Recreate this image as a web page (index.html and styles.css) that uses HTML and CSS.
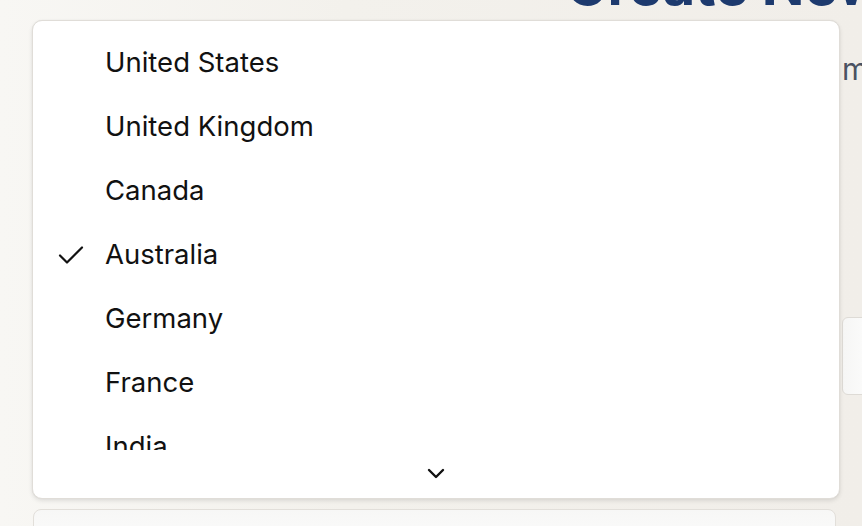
FILE: index.html
```html
<!DOCTYPE html>
<html>
<head>
<meta charset="utf-8">
<link rel="stylesheet" href="styles.css">
</head>
<body>
<div class="page">
  <h1 class="title">Create New</h1>
  <p class="subtitle">m</p>
  <div class="field"></div>
  <div class="card"></div>
</div>
<div class="menu">
  <div class="list">
    <div class="item">United States</div>
    <div class="item">United Kingdom</div>
    <div class="item">Canada</div>
    <div class="item selected">
      <svg class="check" width="26" height="20" viewBox="0 0 26 20"><path d="M2 10.5 L9 17.5 L24 2.5" fill="none" stroke="#111" stroke-width="2.2" stroke-linecap="round" stroke-linejoin="round"/></svg>
      Australia</div>
    <div class="item">Germany</div>
    <div class="item">France</div>
    <div class="item">India</div>
  </div>
  <div class="more">
    <svg width="18" height="11" viewBox="0 0 18 11"><path d="M2 2 L9 9 L16 2" fill="none" stroke="#111" stroke-width="2.4" stroke-linecap="round" stroke-linejoin="round"/></svg>
  </div>
</div>
</body>
</html>
```
FILE: styles.css
```css
html, body { margin: 0; padding: 0; }
body {
  width: 862px;
  height: 526px;
  overflow: hidden;
  background: linear-gradient(90deg, #f8f7f4 0%, #f3f1ec 40%, #f1eee9 100%);
  font-family: Inter, "Noto Sans", sans-serif;
  position: relative;
}
.page { position: relative; height: 526px; overflow: hidden; }
.title {
  margin: 0;
  position: absolute;
  left: 566px;
  top: -43px;
  font-size: 56px;
  line-height: 1;
  font-weight: 700;
  color: #1d3a6e;
  white-space: nowrap;
}
.subtitle {
  margin: 0;
  position: absolute;
  left: 842px;
  top: 51px;
  font-size: 30px;
  color: #4a5262;
  white-space: nowrap;
}
.field {
  position: absolute;
  left: 842px;
  top: 317px;
  width: 40px;
  height: 76px;
  background: linear-gradient(90deg, #f6f6f5, #fff);
  border: 1px solid #dedbd6;
  border-radius: 6px;
}
.card {
  position: absolute;
  left: 33px;
  top: 509px;
  width: 801px;
  height: 60px;
  background: linear-gradient(180deg, #f7f7f6, #fff);
  border: 1px solid #e2dfda;
  border-radius: 8px;
}
.menu {
  position: absolute;
  left: 32px;
  top: 20px;
  width: 806px;
  height: 477px;
  background: #fff;
  border: 1px solid #e0ddd8;
  border-radius: 10px;
  box-shadow: 0 2px 4px rgba(0,0,0,0.10), 0 0 1px rgba(0,0,0,0.08);
  display: flex;
  flex-direction: column;
  overflow: hidden;
}
.list {
  height: 429px;
  overflow: hidden;
  padding-top: 9px;
  box-sizing: border-box;
}
.item {
  position: relative;
  height: 64px;
  line-height: 64px;
  padding-left: 72px;
  font-size: 27.5px;
  color: #111;
  white-space: nowrap;
}
.check {
  position: absolute;
  left: 25px;
  top: 23px;
}
.more {
  flex: 1;
  display: flex;
  align-items: center;
  justify-content: center;
  padding-bottom: 2px;
}
```
